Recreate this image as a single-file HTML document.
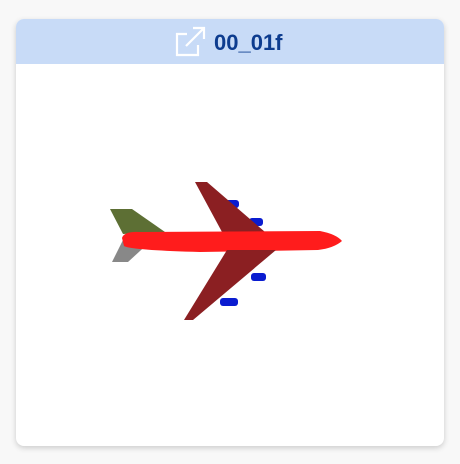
<!DOCTYPE html>
<html><head><style>
html,body{margin:0;padding:0;width:460px;height:464px;background:#f8f8f8;overflow:hidden}
.card{position:absolute;left:16px;top:19px;width:428px;height:427px;background:#fff;border-radius:8px;box-shadow:0 2px 6px rgba(0,0,0,0.18);overflow:hidden}
.hdr{position:absolute;left:0;top:0;width:428px;height:45px;background:#c8dbf7}
.t{position:absolute;left:198px;top:11px;font:bold 22px "Liberation Sans",sans-serif;color:#0d3c8f;line-height:26px}
</style></head><body>
<div class="card"><div class="hdr">
<svg style="position:absolute;left:0;top:0" width="428" height="45">
<g fill="none" stroke="#fff" stroke-width="2.2">
<path d="M171 15H161V36H182V26"/>
<path d="M170 27L187 10M177 9H188V20"/>
</g></svg>
<div class="t">00_01f</div></div></div>
<svg style="position:absolute;left:0;top:0" width="460" height="464">
<g fill="#0a1cd0"><rect x="225" y="200" width="14" height="8" rx="3"/><rect x="249" y="218" width="14" height="8" rx="3"/><rect x="251" y="273" width="15" height="8" rx="3"/><rect x="220" y="298" width="18" height="8" rx="3"/></g>
<polygon points="110,209 132,209 165,232 123,234" fill="#5d6f34"/>
<polygon points="123,240 152,240 128,262 112,262" fill="#888"/>
<polygon points="195,182 207,182 265,232 222,232" fill="#8b1f22"/>
<path d="M122 238Q124 231 140 232L320 231Q336 234 342 241Q334 248 318 250L200 252Q130 250 124 246Z" fill="#ff1c1c"/>
<polygon points="227,250 276,250 193,320 184,320" fill="#8b1f22"/>
</svg>
</body></html>
